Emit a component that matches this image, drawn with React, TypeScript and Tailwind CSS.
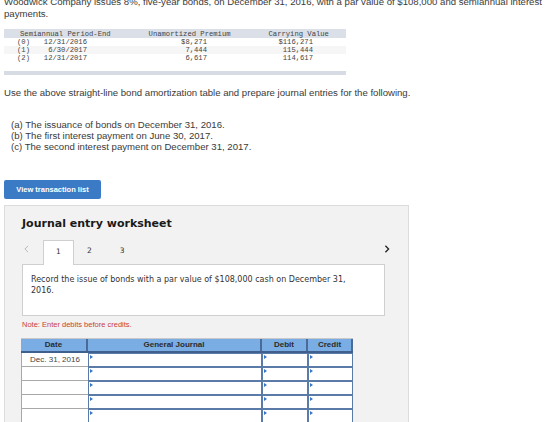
import React from "react";

const amortRows = [
  { n: "(0)", date: "12/31/2016", premium: "$8,271", carrying: "$116,271", shade: false },
  { n: "(1)", date: "6/30/2017", premium: "7,444", carrying: "115,444", shade: true },
  { n: "(2)", date: "12/31/2017", premium: "6,617", carrying: "114,617", shade: false },
];

function AmortTable() {
  return (
    <div className="mt-[9px] w-[342px] whitespace-nowrap font-['Liberation_Mono',monospace] text-[7.2px] leading-[8px] text-[#444]">
      <div className="flex h-[9px] items-center bg-[#dadfe8]">
        <span className="pl-[16px]">Semiannual Period-End</span>
        <span className="ml-[38px]">Unamortized Premium</span>
        <span className="ml-[38px]">Carrying Value</span>
      </div>
      {amortRows.map((r) => (
        <div key={r.n} className={r.shade ? "flex h-[8px] bg-[#f6f6f6]" : "flex h-[8px]"}>
          <span className="w-[13px]" />
          <span className="w-[26px]">{r.n}</span>
          <span className="w-[44px] text-right">{r.date}</span>
          <span className="w-[120px] text-right">{r.premium}</span>
          <span className="w-[106px] text-right">{r.carrying}</span>
        </div>
      ))}
      <div className="mt-[9px] h-[4px] bg-[#d6dbe4]" />
    </div>
  );
}

function InputCell() {
  return (
    <div className="relative h-full border border-[#5a7aa8] bg-white">
      <span className="absolute left-[1px] top-[1px] h-0 w-0 border-y-[2px] border-l-[3px] border-y-transparent border-l-[#3a74c4]" />
    </div>
  );
}

function JournalTable() {
  const rows = ["Dec. 31, 2016", "", "", "", ""];
  return (
    <div className="ml-[16px] mt-[9px] w-[332px] font-['Liberation_Sans',Arial,sans-serif]">
      <div className="grid h-[15px] grid-cols-[67px_174px_46px_45px] border-b-2 border-t border-b-[#3f5f8c] border-t-[#c8c8c8] bg-[#7aade3] text-[8px] font-bold leading-[12px] text-[#2b2b2b]">
        <div className="border-r-2 border-[#4a6b97] text-center">Date</div>
        <div className="border-r-2 border-[#4a6b97] text-center">General Journal</div>
        <div className="border-r-2 border-[#4a6b97] text-center">Debit</div>
        <div className="border-r-2 border-[#4a6b97] text-center">Credit</div>
      </div>
      {rows.map((d, i) => (
        <div key={i} className="grid h-[14px] grid-cols-[67px_174px_46px_45px]">
          <div className="border-b border-l border-[#a8a8a8] bg-white text-center text-[8px] leading-[13px] text-[#444]">
            {d}
          </div>
          <InputCell />
          <InputCell />
          <InputCell />
        </div>
      ))}
    </div>
  );
}

function Worksheet() {
  return (
    <div className="mt-[6px] w-[405px] border border-[#dcdcdc] bg-[#f2f2f2] pb-[40px]">
      <h2 className="ml-[17px] mt-[11px] font-['DejaVu_Sans',Verdana,sans-serif] text-[11px] font-bold leading-[14px] text-[#1a1a1a]">
        Journal entry worksheet
      </h2>
      <div className="mt-[9px] flex h-[24px] items-stretch pl-[19px] pr-[18px] font-['DejaVu_Sans',Verdana,sans-serif] text-[7.5px] text-[#333]">
        <svg viewBox="0 0 6 10" className="mt-[5px] h-[8px] w-[5px]" fill="none" stroke="#aaa" strokeWidth="1">
          <path d="M5 1 1 5l4 4" />
        </svg>
        <div className="relative z-10 ml-[14px] -mb-px w-[31px] border border-b-0 border-[#cfcfcf] bg-white pt-[5px] text-center">
          1
        </div>
        <span className="ml-[13px] pt-[5px]">2</span>
        <span className="ml-[28px] pt-[5px]">3</span>
        <svg viewBox="0 0 6 10" className="ml-auto mt-[5px] h-[8px] w-[6px]" fill="none" stroke="#222" strokeWidth="1.6">
          <path d="M1 1l4 4-4 4" />
        </svg>
      </div>
      <div className="ml-[17px] h-[52px] w-[363px] border border-[#cfcfcf] bg-white pl-[8px] pr-[30px] pt-[9px] font-['DejaVu_Sans',Verdana,sans-serif] text-[8px] leading-[11px] text-[#333]">
        Record the issue of bonds with a par value of $108,000 cash on December 31, 2016.
      </div>
      <p className="ml-[17px] mt-[4px] font-['Liberation_Sans',Arial,sans-serif] text-[7.5px] leading-[9px] text-[#c8413b]">
        Note: Enter debits before credits.
      </p>
      <JournalTable />
    </div>
  );
}

export default function App() {
  return (
    <div className="h-[422px] w-[560px] overflow-hidden bg-white">
      <div className="px-[4px] font-['Liberation_Sans',Arial,sans-serif] text-[#3a3a3a]">
        <p className="mt-[-4px] text-[9.6px] leading-[12px]">
          Woodwick Company issues 8%, five-year bonds, on December 31, 2016, with a par value of $108,000 and semiannual interest payments.
        </p>
        <AmortTable />
        <p className="mt-[12px] text-[9.6px] leading-[12px]">
          Use the above straight-line bond amortization table and prepare journal entries for the following.
        </p>
        <div className="ml-[7px] mt-[20px] text-[9.6px] leading-[11px]">
          <p>(a) The issuance of bonds on December 31, 2016.</p>
          <p>(b) The first interest payment on June 30, 2017.</p>
          <p>(c) The second interest payment on December 31, 2017.</p>
        </div>
        <button className="mt-[28px] flex h-[19px] w-[97px] items-center justify-center rounded-[2px] bg-[#3b7bc6] text-[7.5px] font-bold text-white">
          View transaction list
        </button>
        <Worksheet />
      </div>
    </div>
  );
}
